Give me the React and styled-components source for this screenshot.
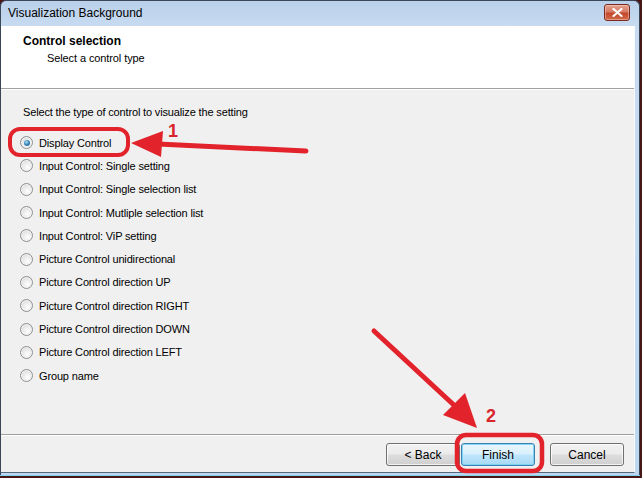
import React from "react";
import styled, { createGlobalStyle } from "styled-components";

const GlobalStyle = createGlobalStyle`
  html, body {
    margin: 0;
    padding: 0;
    background: #4a1717;
  }
  body {
    font-family: "Liberation Sans", Arial, sans-serif;
    -webkit-font-smoothing: antialiased;
  }
`;

const options = [
  "Display Control",
  "Input Control: Single setting",
  "Input Control: Single selection list",
  "Input Control: Mutliple selection list",
  "Input Control: ViP setting",
  "Picture Control unidirectional",
  "Picture Control direction UP",
  "Picture Control direction RIGHT",
  "Picture Control direction DOWN",
  "Picture Control direction LEFT",
  "Group name",
];

function App() {
  return (
    <>
      <GlobalStyle />
      <Screen>
        <Window>
          <TitleBar>
            <Caption>Visualization Background</Caption>
            <CloseButton aria-label="Close">
              <svg width="11" height="9" viewBox="0 0 11 9">
                <path
                  d="M1.5 1 L9.5 8 M9.5 1 L1.5 8"
                  stroke="#fff"
                  strokeWidth="2.2"
                  strokeLinecap="round"
                />
              </svg>
            </CloseButton>
          </TitleBar>
          <Client>
            <Header>
              <HeaderTitle>Control selection</HeaderTitle>
              <HeaderSub>Select a control type</HeaderSub>
            </Header>
            <Separator />
            <Body>
              <Prompt>Select the type of control to visualize the setting</Prompt>
              <RadioList>
                {options.map((label, i) => (
                  <RadioRow key={label}>
                    <Radio $checked={i === 0} />
                    <RadioLabel>{label}</RadioLabel>
                  </RadioRow>
                ))}
              </RadioList>
            </Body>
            <Separator />
            <Footer>
              <Button>&lt; Back</Button>
              <Button $default>Finish</Button>
              <CancelButton>Cancel</CancelButton>
            </Footer>
          </Client>
        </Window>
        <Annotations width="642" height="478" viewBox="0 0 642 478">
          <rect
            x="10"
            y="129"
            width="118"
            height="26"
            rx="10"
            fill="none"
            stroke="#e3232b"
            strokeWidth="4"
          />
          <line
            x1="158"
            y1="144"
            x2="306"
            y2="151"
            stroke="#e3232b"
            strokeWidth="5"
            strokeLinecap="round"
          />
          <polygon points="131,143 163,131 161,157" fill="#e3232b" />
          <text
            x="168"
            y="137"
            fill="#d9262c"
            fontFamily="Liberation Sans, Arial, sans-serif"
            fontWeight="700"
            fontSize="18"
          >
            1
          </text>
          <line
            x1="374"
            y1="331"
            x2="456"
            y2="407"
            stroke="#e3232b"
            strokeWidth="5"
            strokeLinecap="round"
          />
          <polygon points="477,428 443,415 465,393" fill="#e3232b" />
          <text
            x="486"
            y="422"
            fill="#d9262c"
            fontFamily="Liberation Sans, Arial, sans-serif"
            fontWeight="700"
            fontSize="18"
          >
            2
          </text>
          <rect
            x="457"
            y="435"
            width="85"
            height="36"
            rx="9"
            fill="none"
            stroke="#e3232b"
            strokeWidth="4.5"
          />
        </Annotations>
      </Screen>
    </>
  );
}

const Screen = styled.div`
  position: relative;
  width: 642px;
  height: 478px;
  overflow: hidden;
  background: #4a1717;
`;

const Window = styled.div`
  width: 640px;
  height: 475px;
  box-sizing: border-box;
  display: flex;
  flex-direction: column;
  border: 1px solid #3b4756;
  border-bottom: none;
  border-radius: 6px 6px 0 0;
  background: linear-gradient(to bottom, #b9d0ea 0, #c8dbf1 26px, #bcd7ef 100%);
  padding: 0 4px 2px 0;
  box-shadow: 0 1px 0 #7fd3ea;
`;

const TitleBar = styled.div`
  height: 25px;
  flex: none;
  display: flex;
  align-items: center;
  justify-content: space-between;
  padding: 0 5px 0 7px;
`;

const Caption = styled.span`
  font-size: 12px;
  color: #000;
  margin-top: -1px;
`;

const CloseButton = styled.button`
  width: 26px;
  height: 17px;
  margin-top: -3px;
  padding: 0;
  display: flex;
  align-items: center;
  justify-content: center;
  border: 1px solid #7a2a1c;
  border-radius: 3px;
  background: linear-gradient(to bottom, #e6a391 0%, #d67b63 45%, #c4472b 55%, #d16a4b 100%);
  box-shadow: inset 0 0 0 1px rgba(255, 220, 210, 0.45);
`;

const Client = styled.div`
  flex: 1;
  display: flex;
  flex-direction: column;
  background: #f0f0f0;
  border-right: 1px solid #f7fbff;
  border-bottom: 1px solid #54687e;
`;

const Header = styled.div`
  height: 62px;
  box-sizing: border-box;
  background: #fff;
  padding: 8px 0 0 22px;
  flex: none;
`;

const HeaderTitle = styled.div`
  font-size: 12px;
  font-weight: 700;
  color: #000;
  line-height: 14px;
`;

const HeaderSub = styled.div`
  font-size: 11px;
  color: #000;
  line-height: 13px;
  margin: 4px 0 0 24px;
  letter-spacing: -0.1px;
`;

const Separator = styled.div`
  height: 1px;
  flex: none;
  background: #a0a0a0;
  border-bottom: 1px solid #fff;
`;

const Body = styled.div`
  flex: 1;
  padding: 16px 0 0 22px;
`;

const Prompt = styled.div`
  font-size: 11px;
  line-height: 13px;
  color: #000;
  letter-spacing: -0.15px;
`;

const RadioList = styled.div`
  display: flex;
  flex-direction: column;
  margin: 12px 0 0 -3px;
`;

const RadioRow = styled.div`
  height: 23.3px;
  display: flex;
  align-items: center;
  gap: 6px;
`;

const Radio = styled.span`
  position: relative;
  width: 11px;
  height: 11px;
  flex: none;
  border-radius: 50%;
  border: 1px solid #8d8f91;
  background: radial-gradient(circle at 60% 65%, #ffffff 0%, #e6e6e6 55%, #c9cacb 100%);
  box-shadow: inset 0 0 0 1px #f4f4f4;

  &::after {
    content: "";
    display: ${(p) => (p.$checked ? "block" : "none")};
    position: absolute;
    left: 2.5px;
    top: 2.5px;
    width: 6px;
    height: 6px;
    border-radius: 50%;
    background: radial-gradient(circle at 40% 35%, #b5e4f7 0%, #3f8cbf 45%, #1c4a73 100%);
  }
`;

const RadioLabel = styled.span`
  font-size: 11px;
  color: #000;
  letter-spacing: -0.15px;
  white-space: nowrap;
`;

const Footer = styled.div`
  height: 36px;
  flex: none;
  box-sizing: border-box;
  display: flex;
  align-items: flex-start;
  justify-content: flex-end;
  gap: 1px;
  padding: 7px 10px 0 0;
`;

const Button = styled.button`
  width: 74px;
  height: 23px;
  padding: 0;
  font-family: "Liberation Sans", Arial, sans-serif;
  font-size: 12px;
  color: #000;
  border-radius: 3px;
  border: 1px solid ${(p) => (p.$default ? "#3c7fb1" : "#707070")};
  background: ${(p) =>
    p.$default
      ? "linear-gradient(to bottom, #eaf6fd 0%, #d9f0fc 48%, #bee6fd 52%, #a7d9f5 100%)"
      : "linear-gradient(to bottom, #f2f2f2 0%, #ebebeb 48%, #dddddd 52%, #cfcfcf 100%)"};
  box-shadow: inset 0 0 0 1px
    ${(p) => (p.$default ? "rgba(120, 210, 245, 0.9)" : "rgba(255, 255, 255, 0.75)")};
`;

const CancelButton = styled(Button)`
  margin-left: 14px;
`;

const Annotations = styled.svg`
  position: absolute;
  left: 0;
  top: 0;
  pointer-events: none;
`;

export default App;
